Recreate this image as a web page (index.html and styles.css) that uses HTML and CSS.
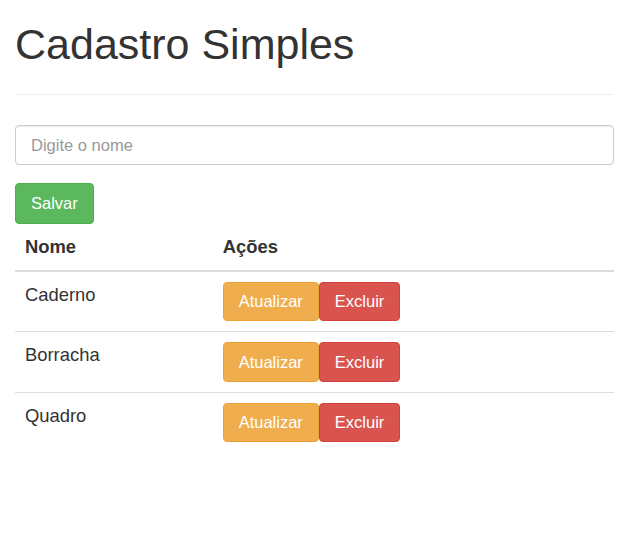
FILE: index.html
```html
<!DOCTYPE html>
<html lang="pt-BR">
<head>
<meta charset="utf-8">
<title>Cadastro Simples</title>
<link rel="stylesheet" href="styles.css">
</head>
<body>
<div class="container">
  <div class="page-header">
    <h1>Cadastro Simples</h1>
  </div>
  <form class="form">
    <input class="form-control" type="text" placeholder="Digite o nome">
    <button type="button" class="btn btn-success">Salvar</button>
  </form>
  <table class="table">
    <thead>
      <tr><th class="col-name">Nome</th><th>Ações</th></tr>
    </thead>
    <tbody>
      <tr>
        <td>Caderno</td>
        <td><div class="actions"><button class="btn btn-warning">Atualizar</button><button class="btn btn-danger">Excluir</button></div></td>
      </tr>
      <tr>
        <td>Borracha</td>
        <td><div class="actions"><button class="btn btn-warning">Atualizar</button><button class="btn btn-danger">Excluir</button></div></td>
      </tr>
      <tr>
        <td>Quadro</td>
        <td><div class="actions"><button class="btn btn-warning">Atualizar</button><button class="btn btn-danger">Excluir</button></div></td>
      </tr>
    </tbody>
  </table>
</div>
</body>
</html>
```
FILE: styles.css
```css
html, body {
  margin: 0;
  padding: 0;
  background: #fff;
}
body {
  font-family: "Liberation Sans", Arial, Helvetica, sans-serif;
  color: #333;
  font-size: 16.5px;
}
.container {
  padding: 0 15px;
}
.page-header {
  margin-top: 21px;
  padding-bottom: 26px;
  border-bottom: 1px solid #eee;
}
h1 {
  margin: 0;
  font-size: 43px;
  font-weight: 400;
  line-height: 1.1;
}
.form {
  margin-top: 30px;
}
.form-control {
  display: block;
  box-sizing: border-box;
  width: 100%;
  height: 39.5px;
  padding: 0 15px;
  font-family: inherit;
  font-size: 16.5px;
  color: #555;
  border: 1px solid #ccc;
  border-radius: 4px;
  box-shadow: inset 0 1px 1px rgba(0,0,0,.075);
  margin: 0;
}
.form-control::placeholder {
  color: #999;
}
.btn {
  display: inline-block;
  box-sizing: border-box;
  height: 39.5px;
  padding: 0 15px;
  font-family: inherit;
  font-size: 16.5px;
  color: #fff;
  border: 1px solid transparent;
  border-radius: 4px;
  line-height: 37px;
  cursor: pointer;
  margin: 0;
}
.form .btn-success {
  margin-top: 18px;
  height: 41px;
}
.btn-success {
  background: #5cb85c;
  border-color: #4cae4c;
}
.btn-warning {
  background: #f0ad4e;
  border-color: #eea236;
}
.btn-danger {
  background: #d9534f;
  border-color: #d43f3a;
}
.actions {
  display: flex;
}
.table {
  width: 100%;
  border-collapse: collapse;
  border-spacing: 0;
  font-size: 18.4px;
}
.table th, .table td {
  padding: 10px;
  text-align: left;
  vertical-align: top;
  line-height: 26px;
}
.table th {
  font-weight: 700;
  border-bottom: 2px solid #ddd;
}
.col-name {
  width: 33%;
}
.table tbody tr + tr td {
  border-top: 1px solid #ddd;
}
```
